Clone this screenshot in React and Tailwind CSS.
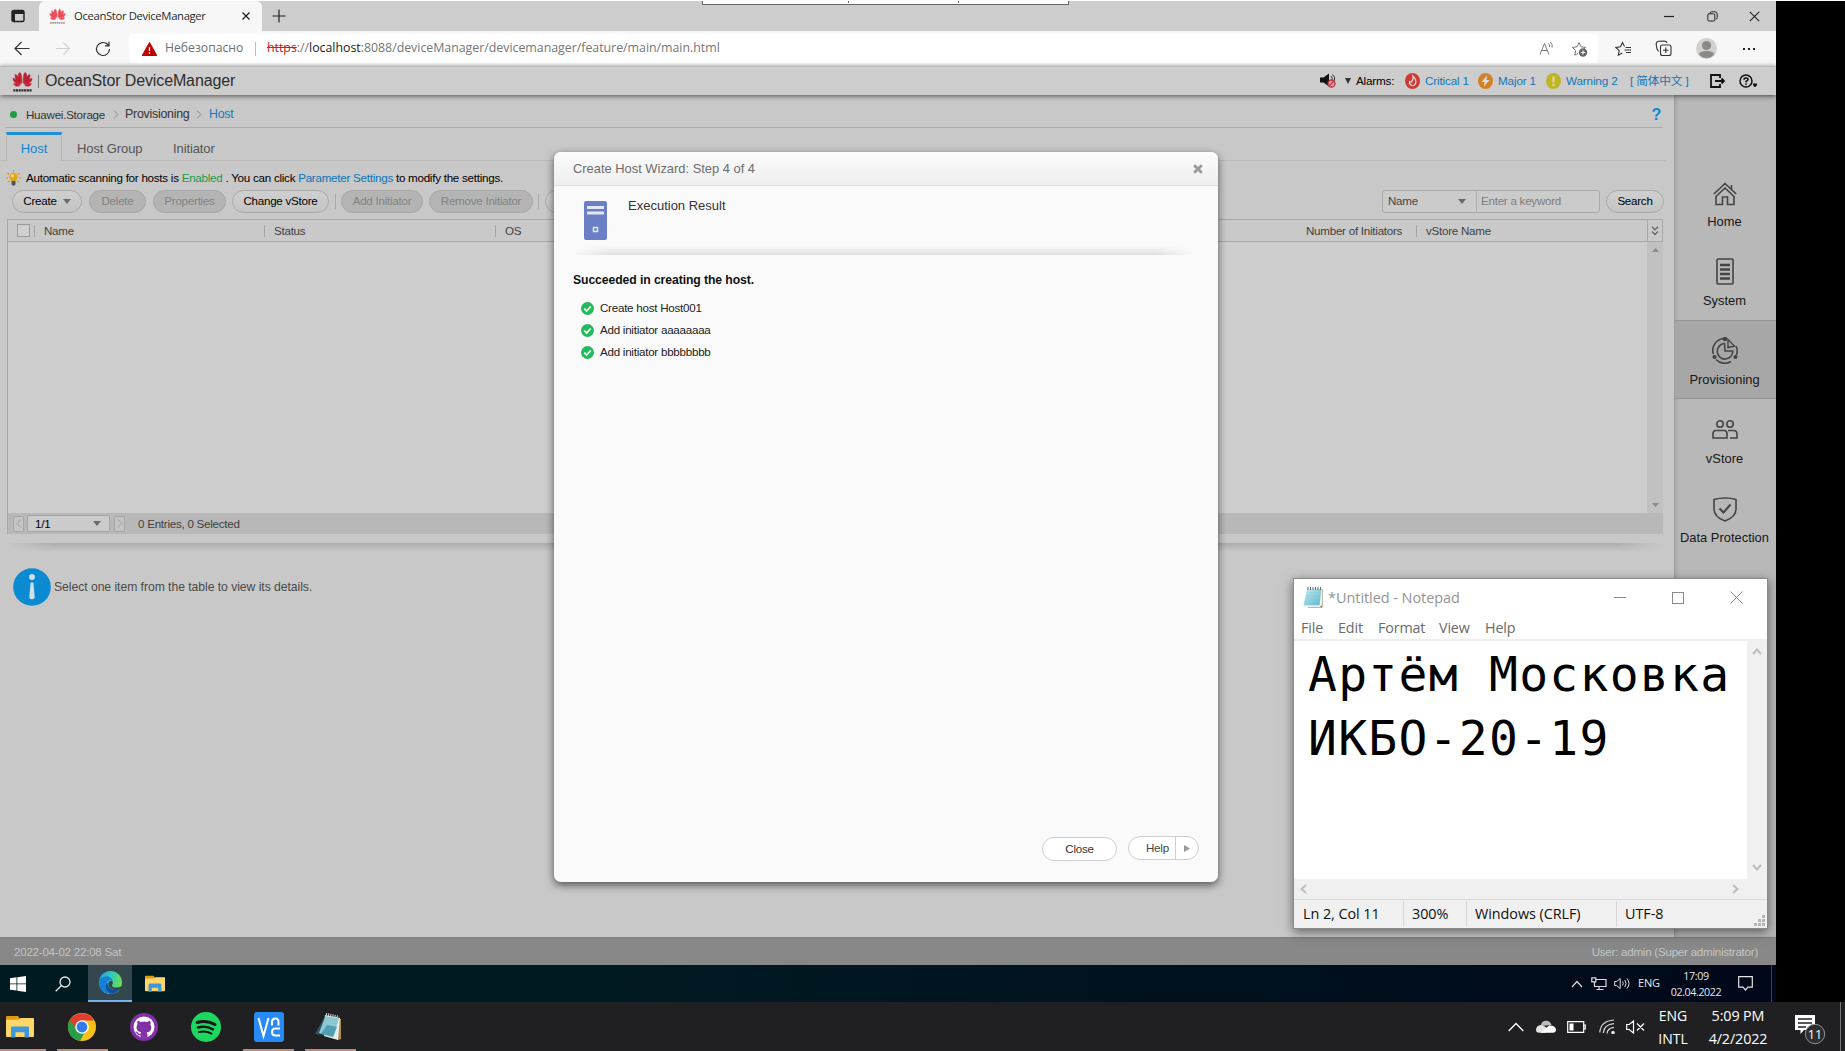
import React from "react";

const arial = "font-['Liberation_Sans',sans-serif]";
const segoe = "font-['Open_Sans',sans-serif]";

/* ---------- shared drawings ---------- */

const petals = [
  "M15 19C9 14 8 6 11.5 2.500C14 3 15 8 15 19Z",
  "M17 19C17 8 18 3 20.500 2.500C24 6 23 14 17 19Z",
  "M14 20C7 17 3.500 11 5 5.500C8 6 12 12 14 20Z",
  "M18 20C20 12 24 6 27 5.500C28.500 11 25 17 18 20Z",
  "M13 21C6 21 1.500 17 1.500 11.500C5 12 10 16 13 21Z",
  "M19 21C22 16 27 12 30.500 11.500C30.500 17 26 21 19 21Z",
  "M12.500 22.500C8 25 4 24 2.500 20C6 19.500 10 20.500 12.500 22.500Z",
  "M19.500 22.500C22 20.500 26 19.500 29.500 20C28 24 24 25 19.500 22.500Z",
];

function Huawei({ className, fill, text }) {
  return (
    <svg className={className} viewBox="0 0 32 33" preserveAspectRatio="none">
      {petals.map((d) => (
        <path key={d} d={d} fill={fill} stroke={fill} strokeWidth="0.9" />
      ))}
      <path d="M2 30.500h28" stroke={text} strokeWidth="3.500" strokeDasharray="3.200 0.900" />
    </svg>
  );
}

function Caret({ className = "w-[8px] h-[5px]", fill = "#6b6b6b" }) {
  return (
    <svg className={className} viewBox="0 0 8 5" preserveAspectRatio="none">
      <path d="M0 0h8L4 5z" fill={fill} />
    </svg>
  );
}

function Line({ d, className, stroke = "#444", w = 1, box = "0 0 16 16", fill = "none", children }) {
  return (
    <svg className={className} viewBox={box} fill={fill} stroke={stroke} strokeWidth={w}>
      <path d={d} />
      {children}
    </svg>
  );
}

function Folder({ className }) {
  return (
    <svg className={className} viewBox="0 0 28 24" preserveAspectRatio="none">
      <path d="M0 2a1 1 0 0 1 1-1h11l2 3h12v3H0z" fill="#e09a10" />
      <path d="M0 5h12l3-2h12a1 1 0 0 1 1 1v18a1 1 0 0 1-1 1H1a1 1 0 0 1-1-1z" fill="#ffd768" />
      <path d="M5 23.500v-10a1.500 1.500 0 0 1 1.500-1.500h15a1.500 1.500 0 0 1 1.500 1.500v10h-4.500v-5.500h-9v5.500z" fill="#3e97dd" />
    </svg>
  );
}

function NotepadIcon({ className }) {
  return (
    <svg className={className} viewBox="0 0 20 22" preserveAspectRatio="none">
      <defs>
        <linearGradient id="np" x1="0" y1="0" x2="1" y2="1">
          <stop offset="0" stopColor="#c4eef5" />
          <stop offset="1" stopColor="#5fb4cb" />
        </linearGradient>
      </defs>
      <path d="M5 2h14.500v19.500H5z" fill="#8b7446" />
      <path d="M3.500 2H19v17.500l-2.500 1.500H1z" fill="#e9f5f7" />
      <path d="M4 2h14.500l-2 17H.5z" fill="url(#np)" />
      <path d="M4.500 6h12M4 9h12M3.500 12h12M3 15h12" stroke="#8fcfdd" strokeWidth=".6" />
      <path d="M5 0v3M7.500 0v3M10 0v3M12.500 0v3M15 0v3M17.500 0v3" stroke="#555" strokeWidth=".9" />
    </svg>
  );
}

/* ---------- browser chrome ---------- */

function TabStrip() {
  return (
    <div className="flex h-[30px] shrink-0 bg-[#cdcdcd]">
      <div className="flex w-[39px] items-center pl-[11px]">
        <svg className="h-[14px] w-[14px]" viewBox="0 0 14 14">
          <rect x="1" y="1.500" width="12" height="11" rx="1.500" fill="none" stroke="#222" strokeWidth="1.400" />
          <path d="M1 2h12v3H1zM1 3h3v9H1z" fill="#222" />
        </svg>
      </div>
      <div className="flex w-[223px] items-center rounded-t-[6px] bg-[#f7f7f7] pl-[10px]">
        <Huawei className="h-[16px] w-[17px]" fill="#ee4a55" text="#a99" />
        <span className={`${segoe} ml-[8px] w-[167px] whitespace-nowrap text-[11.300px] tracking-[-0.360px] text-[#2b2b2b]`}>
          OceanStor DeviceManager
        </span>
        <Line className="h-[10px] w-[10px]" box="0 0 10 10" d="M1.500 1.500l7 7M8.500 1.500l-7 7" stroke="#222" w={1.300} />
      </div>
      <div className="flex flex-1 items-center pl-[10px]">
        <Line className="h-[14px] w-[14px]" box="0 0 14 14" d="M7 .5v13M.5 7h13" stroke="#222" w={1.200} />
      </div>
      <div className="flex w-[117px] items-center">
        <Line className="ml-[5px] h-[10px] w-[10px]" box="0 0 10 10" d="M0 5.500h10" stroke="#222" w={1.200} />
        <svg className="ml-[33px] h-[11px] w-[11px]" viewBox="0 0 11 11" fill="none" stroke="#222">
          <rect x=".8" y="2.800" width="7" height="7.200" rx="1.200" />
          <path d="M3 2.500q0-1.700 1.700-1.700H8q2.200 0 2.200 2.200v3.500q0 1.500-1.500 1.700" />
        </svg>
        <Line className="ml-[31px] h-[11px] w-[11px]" box="0 0 11 11" d="M.8.800l9.400 9.400M10.200.800L.8 10.200" stroke="#222" w={1.100} />
      </div>
    </div>
  );
}

function AddressBar() {
  return (
    <div className="flex h-[35px] shrink-0 items-center bg-[#f7f7f7]">
      <Line className="ml-[14px] h-[15px] w-[16px]" box="0 0 16 15" d="M15.500 7.500H1M7.500 1L1 7.500 7.500 14" stroke="#333" w={1.200} />
      <Line className="ml-[26px] h-[15px] w-[14px]" box="0 0 14 15" d="M0 7.500h13M7.500 1.500l6 6-6 6" stroke="#d0d0d0" w={1.100} />
      <Line className="ml-[25px] h-[16px] w-[16px]" d="M14.500 8a6.500 6.500 0 1 1-2-4.700L14 4.800M14 .8v4h-4" stroke="#333" w={1.200} />
      <div className="ml-[18px] flex h-[29px] w-[1469px] items-center rounded-[4px] bg-white">
        <svg className="ml-[13px] h-[14px] w-[15px]" viewBox="0 0 15 14">
          <path d="M7.500.5L14.800 13.500H.2z" fill="#c00000" stroke="#c00000" strokeLinejoin="round" />
          <path d="M7.500 5v4M7.500 10.300v1.500" stroke="#fff" strokeWidth="1.300" />
        </svg>
        <span className={`${segoe} ml-[8px] w-[90px] whitespace-nowrap text-[12.200px] text-[#6f6f6f]`}>Небезопасно</span>
        <i className="h-[14px] w-px bg-[#bbb]" />
        <span className={`${segoe} ml-[11px] flex-1 whitespace-nowrap text-[12.400px] tracking-[-0.030px] text-[#767676]`}>
          <span className="text-[#c5221f] line-through">https</span>://<span className="text-[#1c1c1c]">localhost</span>
          :8088/deviceManager/devicemanager/feature/main/main.html
        </span>
        <svg className="h-[15px] w-[16px]" viewBox="0 0 16 15" fill="none" stroke="#777">
          <path d="M1 13.500L5.500 2.500 10 13.500M2.500 9.500h6M9.500 2.500q1.500 1.500 1 3.500M11.500 1q2.500 2.500 1.500 5.500" />
        </svg>
        <svg className="ml-[16px] mr-[10px] h-[16px] w-[17px]" viewBox="0 0 17 16" fill="none" stroke="#777">
          <path d="M8 1.500l2 4.300 4.700.6-1.500 1.400M8 1.500L6 5.800l-4.700.6 3.400 3.200-.9 4.600L7 12.500" />
          <circle cx="12" cy="11.500" r="4.200" fill="#666" stroke="none" />
          <path d="M12 9.300v4.400M9.800 11.500h4.400" stroke="#fff" />
        </svg>
      </div>
      <svg className="ml-[17px] h-[16px] w-[17px]" viewBox="0 0 17 16" fill="none" stroke="#333" strokeWidth="1.100">
        <path d="M9.500 5.500L7.500 1.500l-2 4.300-4.700.6 3.400 3.200-.9 4.600 4-2.200M10.500 6.500h5.500M9.500 9h6.500M11 11.500h5" />
      </svg>
      <svg className="ml-[23px] h-[17px] w-[17px]" viewBox="0 0 17 17" fill="none" stroke="#333" strokeWidth="1.100">
        <rect x="5.500" y="5" width="10.500" height="10.500" rx="2" />
        <path d="M10.800 7.500v5.500M8 10.300h5.500M3.500 11.500Q1.500 9 1.200 4.500 1 1.500 3.500 1.200L9 1q2.500 0 3 2" />
      </svg>
      <svg className="ml-[24px] h-[21px] w-[21px]" viewBox="0 0 21 21">
        <circle cx="10.500" cy="10.500" r="10.500" fill="#d3d1ce" />
        <circle cx="10.500" cy="7.500" r="4.600" fill="#8c8885" />
        <path d="M3 16.500q0-3.500 7.500-3.500t7.500 3.500q-3 3.500-7.500 3.500t-7.500-3.500z" fill="#8c8885" />
      </svg>
      <span className="ml-[26px] flex gap-[3px]">
        <i className="h-[2px] w-[2px] bg-[#222]" />
        <i className="h-[2px] w-[2px] bg-[#222]" />
        <i className="h-[2px] w-[2px] bg-[#222]" />
      </span>
    </div>
  );
}

/* ---------- DeviceManager ---------- */

function Header() {
  return (
    <div className={`${arial} relative z-10 flex h-[29px] shrink-0 items-center border-t border-[#bcbcbc] bg-[#cdcdcd] text-[11.700px] tracking-[-0.150px] shadow-[0_1px_5px_rgba(0,0,0,0.6)]`}>
      <Huawei className="ml-[12px] h-[21px] w-[21px]" fill="#c0202e" text="#2a2a2a" />
      <i className="ml-[5px] h-[13px] w-px bg-[#777]" />
      <span className="ml-[6px] flex-1 whitespace-nowrap text-[16px] tracking-[-0.120px] text-[#2d2d2d]">OceanStor DeviceManager</span>
      <div className="flex w-[456px] items-center whitespace-nowrap text-[#1277b8]">
        <svg className="h-[15px] w-[17px]" viewBox="0 0 17 15">
          <path d="M0 4.500h3.500L9 .5v13L3.500 9.500H0z" fill="#111" />
          <path d="M11 3q2 2 1 5M12.500 1.500q3 2.500 2 6" fill="none" stroke="#333" />
          <circle cx="11.500" cy="10.500" r="3.500" fill="#d6a9a9" stroke="#b8313a" strokeWidth="1.300" />
          <path d="M9.500 12.500l4-4" stroke="#b8313a" strokeWidth="1.300" />
        </svg>
        <Caret className="ml-[8px] h-[6px] w-[6px]" fill="#333" />
        <span className="ml-[5px] w-[49px] tracking-[-0.2px] text-black">Alarms:</span>
        <svg className="h-[16px] w-[15px]" viewBox="0 0 15 16">
          <ellipse cx="7.500" cy="8" rx="7.500" ry="8" fill="#cf3a35" />
          <path d="M8 3q4 4.500 2.500 7.500Q9.500 13 7 12.500 4 11.500 4.500 8.500L6 9.500Q8.500 7 8 3z" fill="none" stroke="#dcc" strokeWidth="1.300" />
        </svg>
        <span className="ml-[5px] w-[53px]">Critical 1</span>
        <svg className="h-[16px] w-[15px]" viewBox="0 0 15 16">
          <ellipse cx="7.500" cy="8" rx="7.500" ry="8" fill="#d28125" />
          <path d="M9 2.500L3.500 9h3L6 13.500 11.500 7h-3z" fill="#ddd" />
        </svg>
        <span className="ml-[5px] w-[48px]">Major 1</span>
        <svg className="h-[16px] w-[15px]" viewBox="0 0 15 16">
          <ellipse cx="7.500" cy="8" rx="7.500" ry="8" fill="#bdb524" />
          <path d="M7.500 3.500v6M7.500 11v2" stroke="#dedcb0" strokeWidth="2" />
        </svg>
        <span className="ml-[5px] w-[64px]">Warning 2</span>
        <span className="w-[80px] font-['Liberation_Sans','Noto_Sans_CJK_SC',sans-serif]">[ 简体中文 ]</span>
        <svg className="h-[14px] w-[15px]" viewBox="0 0 15 14" fill="none" stroke="#111" strokeWidth="1.800">
          <path d="M10 4V1H1v12h9v-3M5 7h9M11.500 4.500L14 7l-2.500 2.500" />
        </svg>
        <svg className="ml-[14px] h-[14px] w-[19px]" viewBox="0 0 19 14" fill="none" stroke="#111" strokeWidth="1.500">
          <circle cx="7" cy="7" r="6" />
          <path d="M5 5.700Q5 4 7 4t2 1.600Q9 6.800 7 7.400V8.500M7 9.500V11" />
          <path d="M14 9.500h4v1.500l-1.500 2h-1L14 11z" fill="#111" stroke="none" />
        </svg>
      </div>
    </div>
  );
}

function Pill({ className, children, off }) {
  return (
    <span
      className={`flex h-[23px] shrink-0 items-center justify-center rounded-full border whitespace-nowrap ${
        off ? "border-[#a6a6a6] bg-[#b4b4b4] text-[#838383]" : "border-[#a9a9a9] bg-[linear-gradient(#cfcfcf,#c4c4c4)] text-black"
      } ${className}`}
    >
      {children}
    </span>
  );
}

function HostTable() {
  return (
    <div className="ml-[7px] mt-[6px] w-[1656px]">
      <div className="flex h-[23px] items-center border border-[#a9a9a9] bg-[#c9c9c9] whitespace-nowrap text-[#3f3f3f]">
        <i className="ml-[9px] h-[13px] w-[13px] border border-[#999] bg-[#d0d0d0]" />
        <i className="ml-[4px] h-[12px] w-px bg-[#a5a5a5]" />
        <span className="ml-[9px] w-[220px]">Name</span>
        <i className="h-[12px] w-px bg-[#a5a5a5]" />
        <span className="ml-[9px] w-[221px]">Status</span>
        <i className="h-[12px] w-px bg-[#a5a5a5]" />
        <span className="ml-[9px] w-[801px]">OS</span>
        <span className="w-[110px]">Number of Initiators</span>
        <i className="h-[12px] w-px bg-[#a5a5a5]" />
        <span className="ml-[9px] flex-1">vStore Name</span>
        <span className="flex h-[21px] w-[15px] items-center justify-center border-l border-[#a9a9a9]">
          <Line className="h-[10px] w-[8px]" box="0 0 8 10" d="M1 .8l3 3 3-3M1 5.500l3 3 3-3" stroke="#666" w={1.300} />
        </span>
      </div>
      <div className="flex h-[271px] border-l border-[#a9a9a9] bg-[#cdcdcd]">
        <div className="flex-1" />
        <div className="flex w-[16px] flex-col items-center justify-between bg-[#c1c1c1] py-[6px]">
          <Caret className="h-[4px] w-[7px] rotate-180" fill="#8a8a8a" />
          <Caret className="h-[4px] w-[7px]" fill="#8a8a8a" />
        </div>
      </div>
      <div className="flex h-[21px] items-center border-l border-[#a9a9a9] bg-[#b8b8b8] text-[#3f3f3f]">
        <span className="ml-[5px] flex h-[16px] w-[11px] items-center justify-center rounded-[2px] border border-[#a5a5a5] bg-[#c4c4c4]">
          <Line className="h-[9px] w-[6px]" box="0 0 6 9" d="M5 .5L1 4.500l4 4" stroke="#999" />
        </span>
        <span className="ml-[3px] flex h-[17px] w-[83px] items-center justify-between rounded-[2px] border border-[#a5a5a5] bg-[#cbcbcb] pl-[7px] pr-[8px] text-black">
          1/1 <Caret />
        </span>
        <span className="ml-[4px] flex h-[16px] w-[11px] items-center justify-center rounded-[2px] border border-[#a5a5a5] bg-[#c4c4c4]">
          <Line className="h-[9px] w-[6px]" box="0 0 6 9" d="M1 .5l4 4-4 4" stroke="#999" />
        </span>
        <span className="ml-[13px]">0 Entries, 0 Selected</span>
      </div>
    </div>
  );
}

function Content() {
  return (
    <div className={`${arial} flex w-[1674px] flex-col bg-[#c8c8c8] text-[11.600px] tracking-[-0.250px]`}>
      <div className="ml-[5px] mr-[11px] flex h-[33px] items-center border-b border-[#acacac] pt-[7px] whitespace-nowrap text-[#333]">
        <i className="ml-[5px] h-[7px] w-[7px] rounded-full bg-[#1a9c47]" />
        <span className="ml-[9px] w-[87px]">Huawei.Storage</span>
        <Line className="h-[9px] w-[6px]" box="0 0 6 9" d="M1 .5l4 4-4 4" stroke="#888" />
        <span className="ml-[6px] w-[71px] text-[12.400px]">Provisioning</span>
        <Line className="h-[9px] w-[6px]" box="0 0 6 9" d="M1 .5l4 4-4 4" stroke="#888" />
        <span className="ml-[7px] flex-1 text-[12.400px] text-[#0e7cc1]">Host</span>
        <span className="mr-[2px] text-[16px] font-bold text-[#0e86cf]">?</span>
      </div>
      <div className="mt-[4px] flex h-[29px] items-end text-[13px] tracking-[-0.100px] text-[#555] whitespace-nowrap">
        <div className="flex h-[29px] w-[6px] items-end"><i className="h-px w-full bg-[#b9b9b9]" /></div>
        <div className="flex h-[29px] w-[56px] items-center justify-center border-x border-t-[3px] border-x-[#b5b5b5] border-t-[#1e8fd2] pt-[2px] text-[#0e86cf]">Host</div>
        <div className="flex h-[29px] w-[96px] items-center border-b border-[#b9b9b9] pl-[15px] pt-[6px]">Host Group</div>
        <div className="mr-[8px] flex h-[29px] flex-1 items-center border-b border-[#b9b9b9] pl-[15px] pt-[6px]">Initiator</div>
      </div>
      <div className="flex h-[28px] items-center whitespace-nowrap pl-[6px] pt-[6px] text-black">
        <svg className="h-[16px] w-[15px]" viewBox="0 0 15 16">
          <path d="M7.500 0v2M1.500 3L3 4.500M13.500 3L12 4.500M0 8h2M13 8h2M2 12l1.500-1M13 12l-1.500-1" stroke="#d99a17" strokeWidth="1.200" />
          <circle cx="7.500" cy="7" r="4.200" fill="#e2a51e" />
          <circle cx="6.500" cy="5.800" r="1.500" fill="#f6e08a" />
          <path d="M5.500 11h4v3.500L7.500 16l-2-1.500z" fill="#555" />
        </svg>
        <span className="ml-[5px]">
          Automatic scanning for hosts is <span className="text-[#1e9a4d]">Enabled</span> . You can click{" "}
          <span className="text-[#0e72b5]">Parameter Settings</span> to modify the settings.
        </span>
      </div>
      <div className="flex h-[24px] items-center pl-[12px]">
        <Pill className="w-[70px] gap-[6px]">Create <Caret /></Pill>
        <Pill off className="ml-[7px] w-[57px]">Delete</Pill>
        <Pill off className="ml-[7px] w-[73px]">Properties</Pill>
        <Pill className="ml-[6px] w-[97px]">Change vStore</Pill>
        <i className="ml-[6px] h-[15px] w-px bg-[#aaa]" />
        <Pill off className="ml-[5px] w-[82px]">Add Initiator</Pill>
        <Pill off className="ml-[6px] w-[104px]">Remove Initiator</Pill>
        <i className="ml-[5px] h-[15px] w-px bg-[#aaa]" />
        <Pill className="ml-[6px] w-[80px]" />
        <div className="ml-[757px] flex h-[23px] w-[218px] shrink-0 items-center rounded-[3px] border border-[#a9a9a9] bg-[#cbcbcb]">
          <span className="flex h-full w-[94px] items-center justify-between border-r border-[#b0b0b0] pl-[5px] pr-[10px] text-[#444]">
            Name <Caret />
          </span>
          <span className="pl-[4px] text-[#7d7d7d]">Enter a keyword</span>
        </div>
        <Pill className="ml-[6px] w-[58px]">Search</Pill>
      </div>
      <HostTable />
      <div className="ml-[7px] mt-[9px] h-[9px] w-[1656px] bg-[linear-gradient(90deg,#c8c8c8,transparent_3%,transparent_97%,#c8c8c8),linear-gradient(#ababab,#c8c8c8)]" />
      <div className="mt-[16px] flex items-center pl-[13px] text-[12.200px] tracking-[-0.050px] text-[#4a4a4a]">
        <svg className="h-[38px] w-[38px]" viewBox="0 0 38 38">
          <circle cx="19" cy="19" r="18.800" fill="#0a8ad0" />
          <circle cx="19" cy="9" r="2.900" fill="#cfe0ea" />
          <path d="M17.600 14.500h2.800l1.300 14.500q0 2.200-2.700 2.200t-2.700-2.200z" fill="#cfe0ea" />
        </svg>
        <span className="ml-[3px]">Select one item from the table to view its details.</span>
      </div>
    </div>
  );
}

function NavItem({ label, active, children }) {
  return (
    <div
      className={`flex h-[79px] flex-col items-center justify-end pr-[2px] text-[12.900px] text-[#161616] ${
        active ? "border-y border-[#949494] bg-[#a7a7a7] pb-[10px]" : "pb-[11px]"
      }`}
    >
      {children}
      <span className="mt-[8px] leading-[16px] whitespace-nowrap">{label}</span>
    </div>
  );
}

function Sidebar() {
  const s = { fill: "none", stroke: "#444", strokeWidth: 1.6 };
  return (
    <div className={`${arial} w-[102px] border-l border-[#9f9f9f] bg-[#b8b8b8] pt-[67px] shadow-[inset_2px_0_3px_rgba(0,0,0,0.08)]`}>
      <NavItem label="Home">
        <svg className="h-[24px] w-[24px]" viewBox="0 0 24 24" {...s}>
          <path d="M.8 12L12 1.500 23.200 12M18.500 3v4.500M3 14.500L12 6l9 8.500V22.500h-6.500V15h-5v7.500H3z" />
        </svg>
      </NavItem>
      <NavItem label="System">
        <svg className="h-[27px] w-[18px]" viewBox="0 0 18 27" {...s}>
          <rect x="1" y="1" width="16" height="25" rx="1" />
          <path d="M4 7h10M4 11.500h10M4 16h10M4 20.500h10" strokeWidth="2.600" />
        </svg>
      </NavItem>
      <NavItem label="Provisioning" active>
        <svg className="h-[27px] w-[26px]" viewBox="0 0 26 27" {...s}>
          <path d="M12.500 6.500A7.800 7.800 0 1 0 20.800 14H13z" />
          <path d="M16 2.500L22.500 9 16 10.500z" strokeWidth="1.400" />
          <path d="M12 1.500A12 12 0 0 0 1.300 17M4 22.500A12 12 0 0 0 19 24.500M24.500 18A12 12 0 0 0 24 9" />
          <circle cx="13" cy="2" r="1.500" fill="#444" />
          <circle cx="2.500" cy="20" r="1.300" fill="#444" />
          <circle cx="23.500" cy="20" r="1.300" fill="#444" />
        </svg>
      </NavItem>
      <NavItem label="vStore">
        <svg className="mb-[4px] h-[19px] w-[26px]" viewBox="0 0 26 19" {...s}>
          <circle cx="8" cy="4" r="3.200" />
          <circle cx="18" cy="4" r="3.200" />
          <path d="M1 18v-4.500q0-3 3-3h8q3 0 3 3V18zM16 10.500h5.500q3.500 0 3.500 3.500v4h-7" />
        </svg>
      </NavItem>
      <NavItem label="Data Protection">
        <svg className="h-[25px] w-[24px]" viewBox="0 0 24 25" {...s}>
          <path d="M1 2.500Q6 1 12 1t11 1.500V12q0 8-11 12Q1 20 1 12z" />
          <path d="M6.500 11.500l4 4 7-8" strokeWidth="2" />
        </svg>
      </NavItem>
    </div>
  );
}

/* ---------- wizard dialog ---------- */

function Wizard() {
  return (
    <div className={`${arial} absolute left-[554px] top-[151px] z-20 flex h-[730px] w-[664px] flex-col rounded-[7px] bg-[#fafafa] text-[11.600px] tracking-[-0.250px] shadow-[0_3px_9px_rgba(0,0,0,0.6)]`}>
      <div className="flex h-[34px] shrink-0 items-center justify-between rounded-t-[7px] border-b border-[#dedede] bg-[linear-gradient(#fcfcfc,#eeeeee)] pl-[19px] pr-[15px] text-[12.900px] tracking-normal text-[#6d6d6d]">
        Create Host Wizard: Step 4 of 4
        <Line className="h-[10px] w-[10px]" box="0 0 10 10" d="M1.200 1.200l7.600 7.600M8.800 1.200L1.200 8.800" stroke="#9a9a9a" w={2.800} />
      </div>
      <div className="flex h-[60px] shrink-0 pl-[30px] pt-[15px]">
        <svg className="h-[40px] w-[23px]" viewBox="0 0 23 40">
          <rect width="23" height="39" rx="2" fill="#6b7fc6" />
          <path d="M3 6.500h17M3 12h17" stroke="#e4e6f0" strokeWidth="3.200" />
          <rect x="9.500" y="26.500" width="4" height="4" fill="none" stroke="#e4e6f0" strokeWidth="1.500" />
        </svg>
        <span className="ml-[21px] mt-[-5px] text-[13px] tracking-normal text-[#333]">Execution Result</span>
      </div>
      <div className="ml-[19px] h-[9px] w-[620px] shrink-0 bg-[linear-gradient(90deg,#fafafa,transparent_6%,transparent_94%,#fafafa),linear-gradient(#fafafa,#dedede)]" />
      <p className="ml-[19px] mt-[16px] text-[12.200px] leading-[18px] font-bold tracking-[-0.080px] text-[#111]">Succeeded in creating the host.</p>
      <ul className="ml-[27px] mt-[7px] text-[#222]">
        {["Create host Host001", "Add initiator aaaaaaaa", "Add initiator bbbbbbbb"].map((t) => (
          <li key={t} className="flex h-[22.400px] items-center">
            <svg className="mt-[2px] h-[13px] w-[13px]" viewBox="0 0 13 13">
              <circle cx="6.500" cy="6.500" r="6.500" fill="#22bb5b" />
              <path d="M3.300 6.700l2.300 2.300 4.100-4.500" fill="none" stroke="#fff" strokeWidth="1.800" />
            </svg>
            <span className="ml-[6px]">{t}</span>
          </li>
        ))}
      </ul>
      <div className="mt-auto mb-[21px] mr-[19px] flex justify-end gap-[11px]">
        <span className="mt-[1px] flex h-[24px] w-[75px] items-center justify-center rounded-full border border-[#cfcfcf] bg-white text-[#333]">Close</span>
        <span className="flex h-[24px] w-[71px] items-center rounded-full border border-[#cfcfcf] bg-white text-[#444]">
          <span className="w-[46px] pl-[17px]">Help</span>
          <span className="flex h-full flex-1 items-center border-l border-[#cfcfcf] pl-[8px]">
            <svg className="h-[7px] w-[6px]" viewBox="0 0 6 7"><path d="M0 0l6 3.500L0 7z" fill="#999" /></svg>
          </span>
        </span>
      </div>
    </div>
  );
}

/* ---------- Notepad ---------- */

function Notepad() {
  return (
    <div className={`${segoe} absolute left-[1293px] top-[577px] z-30 flex h-[351px] w-[475px] flex-col border border-[#8a8a8a] bg-white shadow-[0_3px_10px_rgba(0,0,0,0.5)]`}>
      <div className="flex h-[37px] shrink-0 items-center pl-[9px] text-[14.500px] text-[#949494]">
        <NotepadIcon className="h-[21px] w-[20px]" />
        <span className="ml-[5px] flex-1 whitespace-nowrap tracking-[-0.060px]">*Untitled - Notepad</span>
        <Line className="h-[12px] w-[12px]" box="0 0 12 12" d="M0 5.500h12" stroke="#8a8a8a" />
        <span className="ml-[46px] h-[12px] w-[12px] border border-[#8a8a8a]" />
        <Line className="ml-[46px] mr-[24px] h-[13px] w-[13px]" box="0 0 13 13" d="M.5.500l12 12M12.500.500l-12 12" stroke="#8a8a8a" />
      </div>
      <div className="flex h-[25px] shrink-0 items-center border-b-2 border-[#efefef] pl-[7px] text-[14.300px] tracking-[-0.140px] whitespace-nowrap text-[#6a6a6a]">
        <span className="w-[37px]">File</span>
        <span className="w-[40px]">Edit</span>
        <span className="w-[61px]">Format</span>
        <span className="w-[46px]">View</span>
        <span>Help</span>
      </div>
      <div className="flex flex-1">
        <div className="flex-1 whitespace-nowrap pl-[14px] pt-[1px] font-['DejaVu_Sans_Mono',monospace] text-[48px] leading-[64px] tracking-[1.270px] text-black">
          <div>Артём Московка</div>
          <div>ИКБО-20-19</div>
        </div>
        <div className="flex w-[20px] flex-col items-center justify-between bg-[#f0f0f0] pb-[8px] pt-[7px]">
          <Line className="h-[7px] w-[10px]" box="0 0 10 7" d="M1 6l4-4.500L9 6" stroke="#bdbdbd" w={2} />
          <Line className="h-[7px] w-[10px]" box="0 0 10 7" d="M1 1l4 4.500L9 1" stroke="#bdbdbd" w={2} />
        </div>
      </div>
      <div className="flex h-[20px] shrink-0 items-center justify-between bg-[#f0f0f0] pl-[6px] pr-[28px]">
        <Line className="h-[10px] w-[7px]" box="0 0 7 10" d="M6 1L1.500 5 6 9" stroke="#bdbdbd" w={2} />
        <Line className="h-[10px] w-[7px]" box="0 0 7 10" d="M1 1l4.500 4L1 9" stroke="#bdbdbd" w={2} />
      </div>
      <div className="flex h-[29px] shrink-0 items-center border-t border-[#d7d7d7] bg-[#f0f0f0] text-[14.400px] tracking-[-0.060px] whitespace-nowrap text-[#111]">
        <span className="flex h-[26px] w-[110px] items-center border-r border-[#d7d7d7] pl-[9px]">Ln 2, Col 11</span>
        <span className="flex h-[26px] w-[63px] items-center border-r border-[#d7d7d7] pl-[8px]">300%</span>
        <span className="flex h-[26px] w-[150px] items-center border-r border-[#d7d7d7] pl-[8px]">Windows (CRLF)</span>
        <span className="flex-1 pl-[8px]">UTF-8</span>
        <svg className="mr-[2px] mt-[12px] h-[11px] w-[11px]" viewBox="0 0 11 11" fill="#b5b5b5">
          <path d="M8 0h3v3H8zM8 4h3v3H8zM4 4h3v3H4zM8 8h3v3H8zM4 8h3v3H4zM0 8h3v3H0z" />
        </svg>
      </div>
    </div>
  );
}

/* ---------- taskbars ---------- */

function RemoteTaskbar() {
  return (
    <div className={`${segoe} flex h-[37px] shrink-0 items-center bg-[linear-gradient(90deg,#001a22,#001a22_35%,#00081a)] text-[11px] text-[#e6e6e6]`}>
      <svg className="ml-[10px] h-[16px] w-[16px]" viewBox="0 0 16 16" fill="#fff">
        <path d="M0 2.300L6.500 1.300v6.200H0zM7.300 1.200L16 0v7.500H7.300zM0 8.300h6.500v6.300L0 13.700zM7.300 8.300H16V16l-8.700-1.200z" />
      </svg>
      <Line className="ml-[29px] h-[16px] w-[16px]" d="M.7 15.300l5.500-5.600" stroke="#e6e6e6" w={1.300}>
        <circle cx="10" cy="6" r="5" />
      </Line>
      <div className="ml-[17px] flex h-[37px] w-[44px] items-center justify-center border-b-2 border-[#70b5f0] bg-[#34474f]">
        <svg className="h-[23px] w-[23px]" viewBox="0 0 24 24">
          <defs>
            <linearGradient id="eg" x1="0" y1="0" x2="1" y2=".4">
              <stop offset="0" stopColor="#1a9fe0" />
              <stop offset=".5" stopColor="#35c6c3" />
              <stop offset="1" stopColor="#66dd52" />
            </linearGradient>
          </defs>
          <circle cx="12" cy="12" r="12" fill="url(#eg)" />
          <path d="M0 12Q1 5.500 8 5.500q6 .5 6.500 6-.5-2-3-2-3 .5-3 4 0 5.500 6 7 4 .5 7-1.500Q18 24 12 24 1 23.500 0 12z" fill="#1580d8" />
          <path d="M8.500 12q-3 4-.5 8 2 3 6 3.800 5-1 7.500-5-3.500 1.500-7.500.5-5-1.800-5.500-7.300z" fill="#0f4f9f" />
          <path d="M14.300 11.500q.5 2-1 3.500 1 2.500 5 2.300 3 0 4.900-1.300l1.800.5-3 2.800q-3.500 1-7 .2-5.500-1.500-5.500-6.500 1-3 3.300-3 1.300.3 1.500 1.500z" fill="#34474f" />
        </svg>
      </div>
      <Folder className="ml-[13px] h-[17px] w-[20px]" />
      <div className="flex-1" />
      <Line className="h-[8px] w-[12px]" box="0 0 12 8" d="M1 7l5-5.500L11 7" stroke="#ddd" w={1.200} />
      <Line className="ml-[8px] h-[13px] w-[16px]" box="0 0 16 13" d="M5 2.500h10v7H3.500V5M8 10v2.500M5.500 12.500h7M.8.800h4v4h-4z" stroke="#ddd" w={1.200} />
      <Line className="ml-[7px] h-[13px] w-[16px]" box="0 0 16 13" d="M.7 4.500h2l3.500-3v10l-3.500-3h-2zM8.500 4.500q1.500 2 0 4M10.800 3q2.500 3.500 0 7M13 1.500q4 5 0 10" stroke="#ddd" />
      <span className="ml-[8px] w-[31px] tracking-[-0.2px]">ENG</span>
      <div className="flex w-[54px] flex-col items-center whitespace-nowrap text-[10.700px] leading-[16px] tracking-[-0.400px]">
        <span>17:09</span>
        <span>02.04.2022</span>
      </div>
      <Line className="ml-[15px] h-[15px] w-[15px]" box="0 0 15 15" d="M.7.700h13.600v10.500H10L7.500 14 5 11.200H.7z" stroke="#e6e6e6" w={1.200} />
      <i className="ml-[18px] mr-[4px] h-[37px] w-px bg-[#3b4252]" />
    </div>
  );
}

function Slot({ width, bar, children }) {
  return (
    <div className={`flex h-[49px] flex-col items-center ${width}`}>
      <div className="flex h-[47px] items-center pt-[2px]">{children}</div>
      <i className={`h-[2px] w-full ${bar ? "bg-[#b98b7c]" : ""}`} />
    </div>
  );
}

function HostTaskbar() {
  return (
    <div className={`${segoe} flex h-[49px] shrink-0 items-center bg-[#202022] text-[14px] text-white`}>
      <Slot width="w-[46px]" bar><Folder className="mr-[6px] h-[23px] w-[28px]" /></Slot>
      <Slot width="ml-[11px] w-[51px]" bar>
        <svg className="mr-[2px] h-[28px] w-[28px]" viewBox="0 0 28 28">
          <circle cx="14" cy="14" r="14" fill="#fbc116" />
          <path d="M14 14L1.900 7A14 14 0 0 0 12 27.900L18 17z" fill="#2a9d48" />
          <path d="M1.900 7A14 14 0 0 1 26.100 7.500H14L9 17z" fill="#e23c30" />
          <circle cx="14" cy="14" r="6.800" fill="#fff" />
          <circle cx="14" cy="14" r="5.400" fill="#2f7de8" />
        </svg>
      </Slot>
      <Slot width="ml-[11px] w-[51px]">
        <svg className="mr-[2px] h-[28px] w-[28px]" viewBox="0 0 28 28">
          <circle cx="14" cy="14" r="14" fill="#8230a8" />
          <circle cx="14" cy="14" r="10.500" fill="#fff" />
          <path d="M8 7.500l3 1.500q3-.8 6 0l3-1.500q1 2 .3 4 1.200 1.500 1 3.500-.3 4-4.800 4.500 1 1 1 2.500v2.300q-3.500 1-7 0V22q-3 .7-4-2l-1.200-1.300q2-.5 3 1.500 1 1 2.200.5.200-1 .8-1.500-4.500-.5-4.800-4.500-.1-2 1-3.500-.7-2 .5-3.700z" fill="#8230a8" />
        </svg>
      </Slot>
      <Slot width="ml-[11px] w-[51px]">
        <svg className="mr-[2px] h-[30px] w-[30px]" viewBox="0 0 30 30" fill="none" stroke="#151515" strokeLinecap="round">
          <circle cx="15" cy="15" r="15" fill="#1ed760" stroke="none" />
          <path d="M6 10.500q9.500-2.800 18 2" strokeWidth="3" />
          <path d="M7 15.500q8-2.300 15 1.800" strokeWidth="2.500" />
          <path d="M8 20q6.500-1.700 12.500 1.600" strokeWidth="2" />
        </svg>
      </Slot>
      <Slot width="ml-[11px] w-[51px]" bar>
        <svg className="h-[30px] w-[30px]" viewBox="0 0 30 30" fill="none" stroke="#fff" strokeWidth="2">
          <rect width="30" height="30" rx="3" fill="#288bf5" stroke="none" />
          <path d="M4.500 6l5 18 5-18" />
          <path d="M18 13.500V10q0-3.500 3.300-3.500T24.500 10v3.500M26 16.500h-4.500q-3.500 0-3.500 3.500t3.500 3.500H26" />
        </svg>
      </Slot>
      <Slot width="ml-[11px] w-[51px]" bar>
        <svg className="mr-[4px] h-[28px] w-[28px]" viewBox="0 0 28 28">
          <path d="M10 3L0 21l11 1z" fill="#2e5560" />
          <path d="M11 3l15 3v20l-3 1z" fill="#b28f45" />
          <path d="M10 2l15 3-2 22-14-4z" fill="#e8eef0" />
          <path d="M10.500 3L24 5.500 18 24 4 20z" fill="#8cc7d3" />
          <path d="M12 12l10 2-4 10-12-3z" fill="#4e9fb2" />
          <path d="M11 1l13 3" stroke="#ddd" strokeWidth="2.500" strokeDasharray="1 1.200" />
        </svg>
      </Slot>
      <div className="flex-1" />
      <Line className="h-[10px] w-[16px]" box="0 0 16 10" d="M.7 9L8 1.500 15.300 9" stroke="#fff" w={1.300} />
      <svg className="ml-[12px] h-[13px] w-[20px]" viewBox="0 0 20 13">
        <path d="M4.500 6Q6 0 11 .8q3.500.7 4.500 4.200z" fill="#bcbcbc" />
        <path d="M0 10q0-4.500 5-5l3 1 6 4-5 2.800H3Q0 12.500 0 10z" fill="#e4e4e4" />
        <path d="M5 12.800L13 5.500q6-.5 7 4 0 3.300-3.500 3.300z" fill="#fff" />
      </svg>
      <svg className="ml-[11px] h-[12px] w-[19px]" viewBox="0 0 19 12" fill="none" stroke="#fff" strokeWidth="1.200">
        <path d="M.7.700h16v10.600H.7zM17 4h1.300v4H17" />
        <path d="M2.500 2.500h4v7h-4z" fill="#fff" stroke="none" />
      </svg>
      <svg className="ml-[13px] h-[15px] w-[16px]" viewBox="0 0 16 15" fill="none" stroke="#d6d6d6" strokeWidth="1.200">
        <path d="M.8 13.500Q1.500 2 15 1M4.300 14Q5 5.500 15 4.700M8 14.500Q8.500 9 15 8.300" />
        <circle cx="14" cy="13.500" r="1.200" fill="#fff" />
      </svg>
      <Line className="ml-[11px] h-[14px] w-[19px]" box="0 0 19 14" d="M.7 4.500h2.500L7.500 1v12L3.200 9.500H.7zM11 3.500l7 7M18 3.500l-7 7" stroke="#fff" w={1.200} />
      <div className="ml-[12px] flex w-[32px] flex-col items-center pt-[2px] leading-[22.500px]">
        <span>ENG</span>
        <span>INTL</span>
      </div>
      <div className="ml-[16px] flex w-[66px] flex-col items-center whitespace-nowrap pt-[2px] text-[14.300px] leading-[22.500px] tracking-[-0.100px]">
        <span>5:09 PM</span>
        <span>4/2/2022</span>
      </div>
      <svg className="ml-[24px] mt-[6px] h-[32px] w-[32px]" viewBox="0 0 32 32">
        <path d="M0 1h20v15H9l-3.500 4v-4H0z" fill="#fff" />
        <path d="M3 5h14M3 9h14M3 13h8" stroke="#202022" strokeWidth="1.300" />
        <circle cx="20" cy="20" r="9.700" fill="#2e2e30" stroke="#909090" />
        <text x="20" y="24.500" textAnchor="middle" fill="#fff" fontSize="12.500" fontFamily="Open Sans, sans-serif">11</text>
      </svg>
      <i className="ml-[13px] mr-[4px] h-[49px] w-px bg-[#777]" />
    </div>
  );
}

export default function App() {
  return (
    <div className="flex h-[1051px] w-[1845px] flex-col overflow-hidden border-t border-white bg-black">
      <div className="relative flex h-[1001px] w-[1776px] flex-col">
        <div className="absolute left-[702px] top-0 z-10 flex h-[4px] w-[367px] border border-t-0 border-[#666] bg-white">
          <i className="h-[2px] w-[146px] border-r border-[#666]" />
          <i className="h-[2px] w-[110px] border-r border-[#666]" />
        </div>
        <TabStrip />
        <AddressBar />
        <Header />
        <div className="flex h-[842px] shrink-0">
          <Content />
          <Sidebar />
        </div>
        <div className={`${arial} flex h-[28px] shrink-0 items-center justify-between border-t border-[#7d7d7d] bg-[#888] pl-[14px] pr-[18px] text-[11.600px] tracking-[-0.250px] text-[#c4c4c4]`}>
          <span>2022-04-02 22:08 Sat</span>
          <span>User: admin (Super administrator)</span>
        </div>
        <RemoteTaskbar />
        <Wizard />
        <Notepad />
      </div>
      <HostTaskbar />
    </div>
  );
}
